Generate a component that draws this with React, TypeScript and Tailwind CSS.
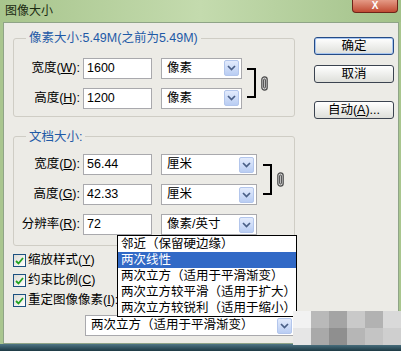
import { ReactNode } from "react";

const FONT = "font-['Liberation_Sans','Noto_Sans_CJK_SC',sans-serif]";

// Blue square arrow at the right end of a combo box
function ArrowBtn() {
  return (
    <span className="flex h-[16px] w-[15px] items-center justify-center rounded-[2px] border border-[#b3c6ec] bg-gradient-to-b from-[#e3ebfc] to-[#b9cdf3]">
      <svg width="9" height="6" viewBox="0 0 9 6">
        <path d="M1 1l3.5 3.5L8 1" fill="none" stroke="#4a5f86" strokeWidth="1.7" />
      </svg>
    </span>
  );
}

function Combo({ value, width }: { value: ReactNode; width: string }) {
  return (
    <div className={`flex h-[21px] items-center justify-between border border-[#a9a9ad] bg-white pl-[5px] pr-[2px] ${width}`}>
      <span className="whitespace-nowrap">{value}</span>
      <ArrowBtn />
    </div>
  );
}

// Label + numeric field + unit combo
function FieldRow({ label, value, unit, unitWidth }: { label: ReactNode; value: string; unit: string; unitWidth: string }) {
  return (
    <div className="flex items-center">
      <span className="w-[66px] whitespace-nowrap text-right">{label}</span>
      <div className="ml-[3px] flex h-[21px] w-[69px] items-center border border-[#a9a9ad] bg-white pl-[3px]">{value}</div>
      <div className="ml-[9px]">
        <Combo value={unit} width={unitWidth} />
      </div>
    </div>
  );
}

// paperclip-like link glyph
function Chain() {
  return (
    <svg width="7" height="15" viewBox="0 0 7 15">
      <rect x="0.8" y="0.8" width="5.4" height="13.4" rx="2.7" fill="#d8d8d8" stroke="#4a4a4a" strokeWidth="1.2" />
      <rect x="2.6" y="3" width="1.8" height="9" rx="0.9" fill="none" stroke="#4a4a4a" strokeWidth="1" />
    </svg>
  );
}

// Right bracket tying two rows together, with the link glyph beside it
function Bracket({ height }: { height: string }) {
  return (
    <div className="flex items-center gap-[5px]">
      <div className={`w-[9px] border-y-2 border-r-2 border-black ${height}`} />
      <Chain />
    </div>
  );
}

function Check({ label }: { label: ReactNode }) {
  return (
    <div className="flex h-[13px] items-center gap-[2px]">
      <span className="flex h-[13px] w-[13px] items-center justify-center border border-[#1c5180] bg-gradient-to-br from-[#dcdcd6] to-white">
        <svg width="9" height="8" viewBox="0 0 9 8">
          <path d="M1 4l2.5 2.5L8 1" fill="none" stroke="#21a121" strokeWidth="1.8" />
        </svg>
      </span>
      <span className="whitespace-nowrap">{label}</span>
    </div>
  );
}

function Button({ children, primary = false }: { children: ReactNode; primary?: boolean }) {
  return (
    <div
      className={`flex h-[18px] w-[80px] items-center justify-center rounded-[3px] border bg-gradient-to-b from-white to-[#dedfda] ${
        primary ? "border-[#254b86] shadow-[inset_0_0_0_1px_#a8c6f0]" : "border-[#3b4350]"
      }`}
    >
      {children}
    </div>
  );
}

const methods = [
  "邻近（保留硬边缘）",
  "两次线性",
  "两次立方（适用于平滑渐变）",
  "两次立方较平滑（适用于扩大）",
  "两次立方较锐利（适用于缩小）",
];

export default function App() {
  return (
    <div className={`relative flex h-[351px] w-[401px] flex-col overflow-hidden bg-[#a9c68f] text-[12.5px] leading-none text-black ${FONT}`}>
      {/* title bar */}
      <div className="flex h-[22px] shrink-0 items-start justify-between bg-gradient-to-r from-[#a8c58d] via-[#c4dbae] to-[#a3c28a]">
        <span className="pl-[5px] pt-[5px] text-[12px] text-[#1b2a12]">图像大小</span>
        <div className="mr-[3px] flex h-[13px] w-[46px] items-center justify-center rounded-b-[4px] border border-t-0 border-[#6e2418] bg-gradient-to-b from-[#e49a86] to-[#c04a32] text-[10px] font-bold text-white">
          X
        </div>
      </div>

      {/* body */}
      <div className="flex flex-1 pl-[3px] pr-[2px]">
        <div className="flex flex-1 border border-[#8fa487] bg-[#ecebe6] pt-[9px]">
          {/* left column */}
          <div className="ml-[9px] flex w-[282px] flex-col">
            <fieldset className="rounded-[3px] border border-[#cfcdc5] pb-[7px] pt-[13px]">
              <legend className="ml-[12px] px-[3px] text-[#1f5aa6]">像素大小:5.49M(之前为5.49M)</legend>
              <div className="flex items-center">
                <div className="flex flex-col gap-[9px]">
                  <FieldRow label={<>宽度(<u>W</u>):</>} value="1600" unit="像素" unitWidth="w-[81px]" />
                  <FieldRow label={<>高度(<u>H</u>):</>} value="1200" unit="像素" unitWidth="w-[81px]" />
                </div>
                <div className="ml-[5px]">
                  <Bracket height="h-[30px]" />
                </div>
              </div>
            </fieldset>

            <fieldset className="mt-[14px] rounded-[3px] border border-[#cfcdc5] pb-[10px] pt-[11px]">
              <legend className="ml-[12px] px-[3px] text-[#1f5aa6]">文档大小:</legend>
              <div className="flex flex-col gap-[9px]">
                <div className="flex items-center">
                  <div className="flex flex-col gap-[9px]">
                    <FieldRow label={<>宽度(<u>D</u>):</>} value="56.44" unit="厘米" unitWidth="w-[96px]" />
                    <FieldRow label={<>高度(<u>G</u>):</>} value="42.33" unit="厘米" unitWidth="w-[96px]" />
                  </div>
                  <div className="ml-[6px]">
                    <Bracket height="h-[31px]" />
                  </div>
                </div>
                <FieldRow label={<>分辨率(<u>R</u>):</>} value="72" unit="像素/英寸" unitWidth="w-[96px]" />
              </div>
            </fieldset>

            <div className="mt-[8px] flex flex-col gap-[7px]">
              <Check label={<>缩放样式(<u>Y</u>)</>} />
              <Check label={<>约束比例(<u>C</u>)</>} />
              <Check label={<>重定图像像素(<u>I</u>):</>} />
            </div>

            <div className="ml-[72px] mt-[8px]">
              <Combo value="两次立方（适用于平滑渐变）" width="w-[210px]" />
            </div>
          </div>

          {/* buttons */}
          <div className="ml-[19px] mt-[5px] flex flex-col">
            <Button primary>确定</Button>
            <div className="mt-[10px]">
              <Button>取消</Button>
            </div>
            <div className="mt-[18px]">
              <Button>
                自动(<u>A</u>)...
              </Button>
            </div>
          </div>
        </div>
      </div>

      {/* bottom frame */}
      <div className="h-[7px] shrink-0 bg-gradient-to-b from-[#4f7686] to-[#1d3a44]" />

      {/* open list of resampling methods */}
      <div className="absolute left-[117px] top-[235px] w-[180px] border border-black bg-white">
        {methods.map((m, i) => (
          <div
            key={m}
            className={`flex h-[16px] items-center whitespace-nowrap px-[3px] ${i === 1 ? "bg-[#3169c6] text-white" : ""}`}
          >
            {m}
          </div>
        ))}
      </div>

      {/* pixelated blur patch at bottom right */}
      <div className="absolute left-[293px] top-[311px] grid h-[34px] w-[108px] grid-cols-6 grid-rows-2">
        <div className="bg-[#f2f2f2]" />
        <div className="bg-[#b9b9b9]" />
        <div className="bg-[#a4a4a4]" />
        <div className="bg-[#c9c9c9]" />
        <div className="bg-[#b2b2b2]" />
        <div className="bg-[#d9d9d9]" />
        <div className="bg-[#e6e6e6]" />
        <div className="bg-[#a9a9a9]" />
        <div className="bg-[#8f8f8f]" />
        <div className="bg-[#b6b6b6]" />
        <div className="bg-[#c4c4c4]" />
        <div className="bg-[#cfcfcf]" />
      </div>
    </div>
  );
}
